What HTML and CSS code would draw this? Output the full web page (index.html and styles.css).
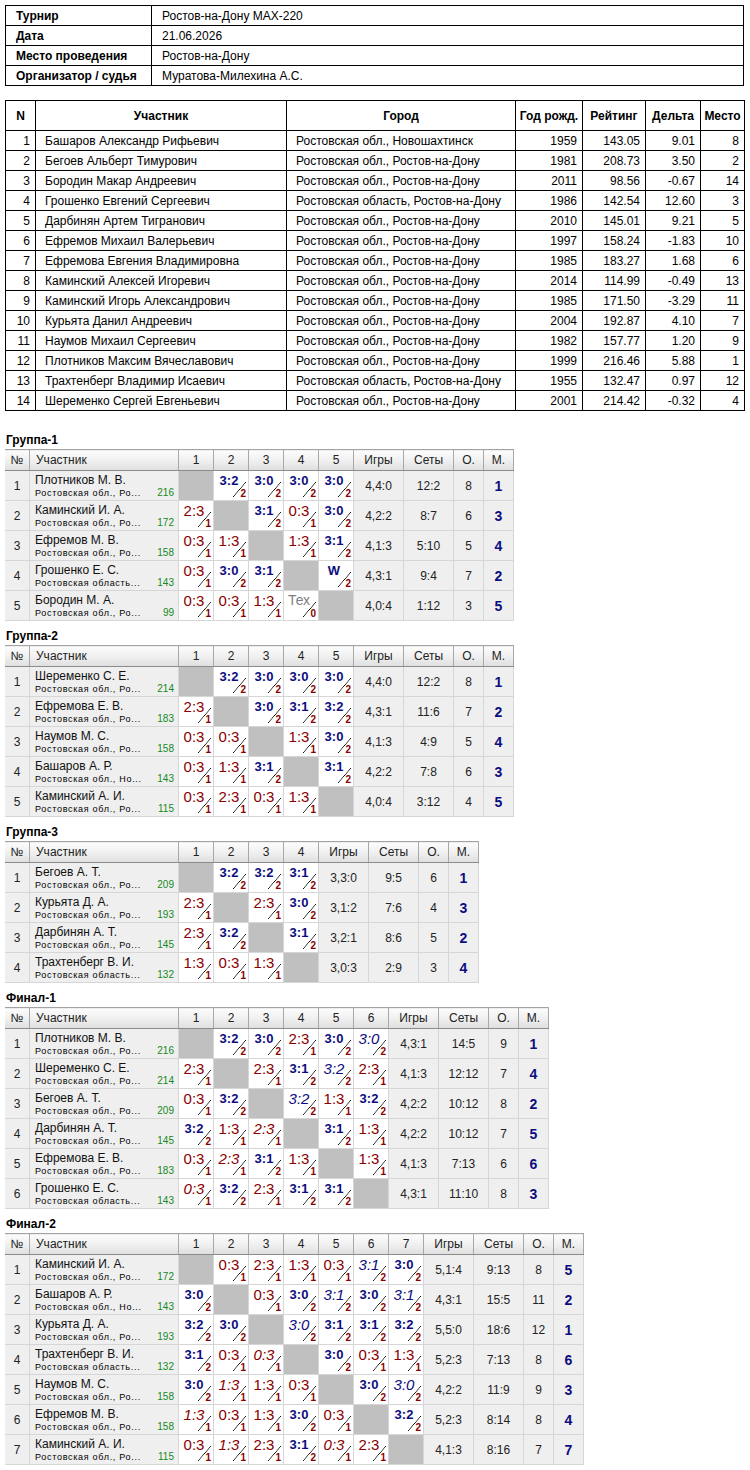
FILE: index.html
```html
<!DOCTYPE html>
<html lang="ru">
<head>
<meta charset="utf-8">
<title>Ростов-на-Дону MAX-220</title>
<link rel="stylesheet" href="styles.css">
</head>
<body>
<table class="info">
<tr><th>Турнир</th><td>Ростов-на-Дону MAX-220</td></tr>
<tr><th>Дата</th><td>21.06.2026</td></tr>
<tr><th>Место проведения</th><td>Ростов-на-Дону</td></tr>
<tr><th>Организатор / судья</th><td>Муратова-Милехина А.С.</td></tr>
</table>

<table class="plist">
<colgroup><col class="c1"><col class="c2"><col class="c3"><col class="c4"><col class="c5"><col class="c6"><col class="c7"></colgroup>
<tr class="hd"><th>N</th><th>Участник</th><th>Город</th><th>Год рожд.</th><th>Рейтинг</th><th>Дельта</th><th>Место</th></tr>
<tr><td class="n">1</td><td>Башаров Александр Рифьевич</td><td>Ростовская обл., Новошахтинск</td><td class="n">1959</td><td class="n">143.05</td><td class="n">9.01</td><td class="n">8</td></tr>
<tr><td class="n">2</td><td>Бегоев Альберт Тимурович</td><td>Ростовская обл., Ростов-на-Дону</td><td class="n">1981</td><td class="n">208.73</td><td class="n">3.50</td><td class="n">2</td></tr>
<tr><td class="n">3</td><td>Бородин Макар Андреевич</td><td>Ростовская обл., Ростов-на-Дону</td><td class="n">2011</td><td class="n">98.56</td><td class="n">-0.67</td><td class="n">14</td></tr>
<tr><td class="n">4</td><td>Грошенко Евгений Сергеевич</td><td>Ростовская область, Ростов-на-Дону</td><td class="n">1986</td><td class="n">142.54</td><td class="n">12.60</td><td class="n">3</td></tr>
<tr><td class="n">5</td><td>Дарбинян Артем Тигранович</td><td>Ростовская обл., Ростов-на-Дону</td><td class="n">2010</td><td class="n">145.01</td><td class="n">9.21</td><td class="n">5</td></tr>
<tr><td class="n">6</td><td>Ефремов Михаил Валерьевич</td><td>Ростовская обл., Ростов-на-Дону</td><td class="n">1997</td><td class="n">158.24</td><td class="n">-1.83</td><td class="n">10</td></tr>
<tr><td class="n">7</td><td>Ефремова Евгения Владимировна</td><td>Ростовская обл., Ростов-на-Дону</td><td class="n">1985</td><td class="n">183.27</td><td class="n">1.68</td><td class="n">6</td></tr>
<tr><td class="n">8</td><td>Каминский Алексей Игоревич</td><td>Ростовская обл., Ростов-на-Дону</td><td class="n">2014</td><td class="n">114.99</td><td class="n">-0.49</td><td class="n">13</td></tr>
<tr><td class="n">9</td><td>Каминский Игорь Александрович</td><td>Ростовская обл., Ростов-на-Дону</td><td class="n">1985</td><td class="n">171.50</td><td class="n">-3.29</td><td class="n">11</td></tr>
<tr><td class="n">10</td><td>Курьята Данил Андреевич</td><td>Ростовская обл., Ростов-на-Дону</td><td class="n">2004</td><td class="n">192.87</td><td class="n">4.10</td><td class="n">7</td></tr>
<tr><td class="n">11</td><td>Наумов Михаил Сергеевич</td><td>Ростовская обл., Ростов-на-Дону</td><td class="n">1982</td><td class="n">157.77</td><td class="n">1.20</td><td class="n">9</td></tr>
<tr><td class="n">12</td><td>Плотников Максим Вячеславович</td><td>Ростовская обл., Ростов-на-Дону</td><td class="n">1999</td><td class="n">216.46</td><td class="n">5.88</td><td class="n">1</td></tr>
<tr><td class="n">13</td><td>Трахтенберг Владимир Исаевич</td><td>Ростовская область, Ростов-на-Дону</td><td class="n">1955</td><td class="n">132.47</td><td class="n">0.97</td><td class="n">12</td></tr>
<tr><td class="n">14</td><td>Шеременко Сергей Евгеньевич</td><td>Ростовская обл., Ростов-на-Дону</td><td class="n">2001</td><td class="n">214.42</td><td class="n">-0.32</td><td class="n">4</td></tr>
</table>

<div class="ttl">Группа-1</div>
<table class="g g5">
<colgroup><col class="cn"><col class="cp"><col class="cs"><col class="cs"><col class="cs"><col class="cs"><col class="cs"><col class="cg"><col class="cg"><col class="co"><col class="co"></colgroup>
<tr><th>№</th><th class="th-l">Участник</th><th>1</th><th>2</th><th>3</th><th>4</th><th>5</th><th>Игры</th><th>Сеты</th><th>О.</th><th>М.</th></tr>
<tr><td class="no">1</td><td class="nm"><div class="n1">Плотников М. В.</div><div class="n2"><span>Ростовская обл., Ро...</span><span class="r">216</span></div></td><td class="x"></td><td class="s w">3:2<i>2</i></td><td class="s w">3:0<i>2</i></td><td class="s w">3:0<i>2</i></td><td class="s w">3:0<i>2</i></td><td class="rs">4,4:0</td><td class="rs">12:2</td><td class="rs">8</td><td class="pl">1</td></tr>
<tr><td class="no">2</td><td class="nm"><div class="n1">Каминский И. А.</div><div class="n2"><span>Ростовская обл., Ро...</span><span class="r">172</span></div></td><td class="s">2:3<i>1</i></td><td class="x"></td><td class="s w">3:1<i>2</i></td><td class="s">0:3<i>1</i></td><td class="s w">3:0<i>2</i></td><td class="rs">4,2:2</td><td class="rs">8:7</td><td class="rs">6</td><td class="pl">3</td></tr>
<tr><td class="no">3</td><td class="nm"><div class="n1">Ефремов М. В.</div><div class="n2"><span>Ростовская обл., Ро...</span><span class="r">158</span></div></td><td class="s">0:3<i>1</i></td><td class="s">1:3<i>1</i></td><td class="x"></td><td class="s">1:3<i>1</i></td><td class="s w">3:1<i>2</i></td><td class="rs">4,1:3</td><td class="rs">5:10</td><td class="rs">5</td><td class="pl">4</td></tr>
<tr><td class="no">4</td><td class="nm"><div class="n1">Грошенко Е. С.</div><div class="n2"><span>Ростовская область...</span><span class="r">143</span></div></td><td class="s">0:3<i>1</i></td><td class="s w">3:0<i>2</i></td><td class="s w">3:1<i>2</i></td><td class="x"></td><td class="s w">W<i>2</i></td><td class="rs">4,3:1</td><td class="rs">9:4</td><td class="rs">7</td><td class="pl">2</td></tr>
<tr><td class="no">5</td><td class="nm"><div class="n1">Бородин М. А.</div><div class="n2"><span>Ростовская обл., Ро...</span><span class="r">99</span></div></td><td class="s">0:3<i>1</i></td><td class="s">0:3<i>1</i></td><td class="s">1:3<i>1</i></td><td class="s t">Тех<i>0</i></td><td class="x"></td><td class="rs">4,0:4</td><td class="rs">1:12</td><td class="rs">3</td><td class="pl">5</td></tr>
</table>

<div class="ttl">Группа-2</div>
<table class="g g5">
<colgroup><col class="cn"><col class="cp"><col class="cs"><col class="cs"><col class="cs"><col class="cs"><col class="cs"><col class="cg"><col class="cg"><col class="co"><col class="co"></colgroup>
<tr><th>№</th><th class="th-l">Участник</th><th>1</th><th>2</th><th>3</th><th>4</th><th>5</th><th>Игры</th><th>Сеты</th><th>О.</th><th>М.</th></tr>
<tr><td class="no">1</td><td class="nm"><div class="n1">Шеременко С. Е.</div><div class="n2"><span>Ростовская обл., Ро...</span><span class="r">214</span></div></td><td class="x"></td><td class="s w">3:2<i>2</i></td><td class="s w">3:0<i>2</i></td><td class="s w">3:0<i>2</i></td><td class="s w">3:0<i>2</i></td><td class="rs">4,4:0</td><td class="rs">12:2</td><td class="rs">8</td><td class="pl">1</td></tr>
<tr><td class="no">2</td><td class="nm"><div class="n1">Ефремова Е. В.</div><div class="n2"><span>Ростовская обл., Ро...</span><span class="r">183</span></div></td><td class="s">2:3<i>1</i></td><td class="x"></td><td class="s w">3:0<i>2</i></td><td class="s w">3:1<i>2</i></td><td class="s w">3:2<i>2</i></td><td class="rs">4,3:1</td><td class="rs">11:6</td><td class="rs">7</td><td class="pl">2</td></tr>
<tr><td class="no">3</td><td class="nm"><div class="n1">Наумов М. С.</div><div class="n2"><span>Ростовская обл., Ро...</span><span class="r">158</span></div></td><td class="s">0:3<i>1</i></td><td class="s">0:3<i>1</i></td><td class="x"></td><td class="s">1:3<i>1</i></td><td class="s w">3:0<i>2</i></td><td class="rs">4,1:3</td><td class="rs">4:9</td><td class="rs">5</td><td class="pl">4</td></tr>
<tr><td class="no">4</td><td class="nm"><div class="n1">Башаров А. Р.</div><div class="n2"><span>Ростовская обл., Но...</span><span class="r">143</span></div></td><td class="s">0:3<i>1</i></td><td class="s">1:3<i>1</i></td><td class="s w">3:1<i>2</i></td><td class="x"></td><td class="s w">3:1<i>2</i></td><td class="rs">4,2:2</td><td class="rs">7:8</td><td class="rs">6</td><td class="pl">3</td></tr>
<tr><td class="no">5</td><td class="nm"><div class="n1">Каминский А. И.</div><div class="n2"><span>Ростовская обл., Ро...</span><span class="r">115</span></div></td><td class="s">0:3<i>1</i></td><td class="s">2:3<i>1</i></td><td class="s">0:3<i>1</i></td><td class="s">1:3<i>1</i></td><td class="x"></td><td class="rs">4,0:4</td><td class="rs">3:12</td><td class="rs">4</td><td class="pl">5</td></tr>
</table>

<div class="ttl">Группа-3</div>
<table class="g g4">
<colgroup><col class="cn"><col class="cp"><col class="cs"><col class="cs"><col class="cs"><col class="cs"><col class="cg"><col class="cg"><col class="co"><col class="co"></colgroup>
<tr><th>№</th><th class="th-l">Участник</th><th>1</th><th>2</th><th>3</th><th>4</th><th>Игры</th><th>Сеты</th><th>О.</th><th>М.</th></tr>
<tr><td class="no">1</td><td class="nm"><div class="n1">Бегоев А. Т.</div><div class="n2"><span>Ростовская обл., Ро...</span><span class="r">209</span></div></td><td class="x"></td><td class="s w">3:2<i>2</i></td><td class="s w">3:2<i>2</i></td><td class="s w">3:1<i>2</i></td><td class="rs">3,3:0</td><td class="rs">9:5</td><td class="rs">6</td><td class="pl">1</td></tr>
<tr><td class="no">2</td><td class="nm"><div class="n1">Курьята Д. А.</div><div class="n2"><span>Ростовская обл., Ро...</span><span class="r">193</span></div></td><td class="s">2:3<i>1</i></td><td class="x"></td><td class="s">2:3<i>1</i></td><td class="s w">3:0<i>2</i></td><td class="rs">3,1:2</td><td class="rs">7:6</td><td class="rs">4</td><td class="pl">3</td></tr>
<tr><td class="no">3</td><td class="nm"><div class="n1">Дарбинян А. Т.</div><div class="n2"><span>Ростовская обл., Ро...</span><span class="r">145</span></div></td><td class="s">2:3<i>1</i></td><td class="s w">3:2<i>2</i></td><td class="x"></td><td class="s w">3:1<i>2</i></td><td class="rs">3,2:1</td><td class="rs">8:6</td><td class="rs">5</td><td class="pl">2</td></tr>
<tr><td class="no">4</td><td class="nm"><div class="n1">Трахтенберг В. И.</div><div class="n2"><span>Ростовская область...</span><span class="r">132</span></div></td><td class="s">1:3<i>1</i></td><td class="s">0:3<i>1</i></td><td class="s">1:3<i>1</i></td><td class="x"></td><td class="rs">3,0:3</td><td class="rs">2:9</td><td class="rs">3</td><td class="pl">4</td></tr>
</table>

<div class="ttl">Финал-1</div>
<table class="g g6">
<colgroup><col class="cn"><col class="cp"><col class="cs"><col class="cs"><col class="cs"><col class="cs"><col class="cs"><col class="cs"><col class="cg"><col class="cg"><col class="co"><col class="co"></colgroup>
<tr><th>№</th><th class="th-l">Участник</th><th>1</th><th>2</th><th>3</th><th>4</th><th>5</th><th>6</th><th>Игры</th><th>Сеты</th><th>О.</th><th>М.</th></tr>
<tr><td class="no">1</td><td class="nm"><div class="n1">Плотников М. В.</div><div class="n2"><span>Ростовская обл., Ро...</span><span class="r">216</span></div></td><td class="x"></td><td class="s w">3:2<i>2</i></td><td class="s w">3:0<i>2</i></td><td class="s">2:3<i>1</i></td><td class="s w">3:0<i>2</i></td><td class="s wi">3:0<i>2</i></td><td class="rs">4,3:1</td><td class="rs">14:5</td><td class="rs">9</td><td class="pl">1</td></tr>
<tr><td class="no">2</td><td class="nm"><div class="n1">Шеременко С. Е.</div><div class="n2"><span>Ростовская обл., Ро...</span><span class="r">214</span></div></td><td class="s">2:3<i>1</i></td><td class="x"></td><td class="s">2:3<i>1</i></td><td class="s w">3:1<i>2</i></td><td class="s wi">3:2<i>2</i></td><td class="s">2:3<i>1</i></td><td class="rs">4,1:3</td><td class="rs">12:12</td><td class="rs">7</td><td class="pl">4</td></tr>
<tr><td class="no">3</td><td class="nm"><div class="n1">Бегоев А. Т.</div><div class="n2"><span>Ростовская обл., Ро...</span><span class="r">209</span></div></td><td class="s">0:3<i>1</i></td><td class="s w">3:2<i>2</i></td><td class="x"></td><td class="s wi">3:2<i>2</i></td><td class="s">1:3<i>1</i></td><td class="s w">3:2<i>2</i></td><td class="rs">4,2:2</td><td class="rs">10:12</td><td class="rs">8</td><td class="pl">2</td></tr>
<tr><td class="no">4</td><td class="nm"><div class="n1">Дарбинян А. Т.</div><div class="n2"><span>Ростовская обл., Ро...</span><span class="r">145</span></div></td><td class="s w">3:2<i>2</i></td><td class="s">1:3<i>1</i></td><td class="s li">2:3<i>1</i></td><td class="x"></td><td class="s w">3:1<i>2</i></td><td class="s">1:3<i>1</i></td><td class="rs">4,2:2</td><td class="rs">10:12</td><td class="rs">7</td><td class="pl">5</td></tr>
<tr><td class="no">5</td><td class="nm"><div class="n1">Ефремова Е. В.</div><div class="n2"><span>Ростовская обл., Ро...</span><span class="r">183</span></div></td><td class="s">0:3<i>1</i></td><td class="s li">2:3<i>1</i></td><td class="s w">3:1<i>2</i></td><td class="s">1:3<i>1</i></td><td class="x"></td><td class="s">1:3<i>1</i></td><td class="rs">4,1:3</td><td class="rs">7:13</td><td class="rs">6</td><td class="pl">6</td></tr>
<tr><td class="no">6</td><td class="nm"><div class="n1">Грошенко Е. С.</div><div class="n2"><span>Ростовская область...</span><span class="r">143</span></div></td><td class="s li">0:3<i>1</i></td><td class="s w">3:2<i>2</i></td><td class="s">2:3<i>1</i></td><td class="s w">3:1<i>2</i></td><td class="s w">3:1<i>2</i></td><td class="x"></td><td class="rs">4,3:1</td><td class="rs">11:10</td><td class="rs">8</td><td class="pl">3</td></tr>
</table>

<div class="ttl">Финал-2</div>
<table class="g g7">
<colgroup><col class="cn"><col class="cp"><col class="cs"><col class="cs"><col class="cs"><col class="cs"><col class="cs"><col class="cs"><col class="cs"><col class="cg"><col class="cg"><col class="co"><col class="co"></colgroup>
<tr><th>№</th><th class="th-l">Участник</th><th>1</th><th>2</th><th>3</th><th>4</th><th>5</th><th>6</th><th>7</th><th>Игры</th><th>Сеты</th><th>О.</th><th>М.</th></tr>
<tr><td class="no">1</td><td class="nm"><div class="n1">Каминский И. А.</div><div class="n2"><span>Ростовская обл., Ро...</span><span class="r">172</span></div></td><td class="x"></td><td class="s">0:3<i>1</i></td><td class="s">2:3<i>1</i></td><td class="s">1:3<i>1</i></td><td class="s">0:3<i>1</i></td><td class="s wi">3:1<i>2</i></td><td class="s w">3:0<i>2</i></td><td class="rs">5,1:4</td><td class="rs">9:13</td><td class="rs">8</td><td class="pl">5</td></tr>
<tr><td class="no">2</td><td class="nm"><div class="n1">Башаров А. Р.</div><div class="n2"><span>Ростовская обл., Но...</span><span class="r">143</span></div></td><td class="s w">3:0<i>2</i></td><td class="x"></td><td class="s">0:3<i>1</i></td><td class="s w">3:0<i>2</i></td><td class="s wi">3:1<i>2</i></td><td class="s w">3:0<i>2</i></td><td class="s wi">3:1<i>2</i></td><td class="rs">4,3:1</td><td class="rs">15:5</td><td class="rs">11</td><td class="pl">2</td></tr>
<tr><td class="no">3</td><td class="nm"><div class="n1">Курьята Д. А.</div><div class="n2"><span>Ростовская обл., Ро...</span><span class="r">193</span></div></td><td class="s w">3:2<i>2</i></td><td class="s w">3:0<i>2</i></td><td class="x"></td><td class="s wi">3:0<i>2</i></td><td class="s w">3:1<i>2</i></td><td class="s w">3:1<i>2</i></td><td class="s w">3:2<i>2</i></td><td class="rs">5,5:0</td><td class="rs">18:6</td><td class="rs">12</td><td class="pl">1</td></tr>
<tr><td class="no">4</td><td class="nm"><div class="n1">Трахтенберг В. И.</div><div class="n2"><span>Ростовская область...</span><span class="r">132</span></div></td><td class="s w">3:1<i>2</i></td><td class="s">0:3<i>1</i></td><td class="s li">0:3<i>1</i></td><td class="x"></td><td class="s w">3:0<i>2</i></td><td class="s">0:3<i>1</i></td><td class="s">1:3<i>1</i></td><td class="rs">5,2:3</td><td class="rs">7:13</td><td class="rs">8</td><td class="pl">6</td></tr>
<tr><td class="no">5</td><td class="nm"><div class="n1">Наумов М. С.</div><div class="n2"><span>Ростовская обл., Ро...</span><span class="r">158</span></div></td><td class="s w">3:0<i>2</i></td><td class="s li">1:3<i>1</i></td><td class="s">1:3<i>1</i></td><td class="s">0:3<i>1</i></td><td class="x"></td><td class="s w">3:0<i>2</i></td><td class="s wi">3:0<i>2</i></td><td class="rs">4,2:2</td><td class="rs">11:9</td><td class="rs">9</td><td class="pl">3</td></tr>
<tr><td class="no">6</td><td class="nm"><div class="n1">Ефремов М. В.</div><div class="n2"><span>Ростовская обл., Ро...</span><span class="r">158</span></div></td><td class="s li">1:3<i>1</i></td><td class="s">0:3<i>1</i></td><td class="s">1:3<i>1</i></td><td class="s w">3:0<i>2</i></td><td class="s">0:3<i>1</i></td><td class="x"></td><td class="s w">3:2<i>2</i></td><td class="rs">5,2:3</td><td class="rs">8:14</td><td class="rs">8</td><td class="pl">4</td></tr>
<tr><td class="no">7</td><td class="nm"><div class="n1">Каминский А. И.</div><div class="n2"><span>Ростовская обл., Ро...</span><span class="r">115</span></div></td><td class="s">0:3<i>1</i></td><td class="s li">1:3<i>1</i></td><td class="s">2:3<i>1</i></td><td class="s w">3:1<i>2</i></td><td class="s li">0:3<i>1</i></td><td class="s">2:3<i>1</i></td><td class="x"></td><td class="rs">4,1:3</td><td class="rs">8:16</td><td class="rs">7</td><td class="pl">7</td></tr>
</table>
</body>
</html>
```

FILE: styles.css
```css
html, body {
  background: #fff;
}
body {
  margin: 5px;
  font-family: "Liberation Sans", Arial, sans-serif;
  font-size: 12px;
  color: #000;
}

/* info table */
.info {
  border-collapse: collapse;
  width: 739px;
}
.info th, .info td {
  border: 1px solid #000;
  height: 19px;
  padding: 0 10px;
  text-align: left;
  font-size: 12px;
  line-height: 14px;
}
.info th {
  width: 125px;
  font-weight: bold;
}

/* participant list */
.plist {
  border-collapse: collapse;
  width: 739px;
  margin-top: 14px;
  margin-bottom: 14px;
  table-layout: fixed;
}
.plist .c1 { width: 30px; }
.plist .c2 { width: 251px; }
.plist .c3 { width: 229px; }
.plist .c4 { width: 67px; }
.plist .c5 { width: 63px; }
.plist .c6 { width: 55px; }
.plist .c7 { width: 44px; }
.plist th, .plist td {
  border: 1px solid #000;
  height: 19px;
  padding: 0 5px 0 9px;
  font-size: 12px;
  line-height: 14px;
  white-space: nowrap;
  overflow: hidden;
  text-align: left;
}
.plist tr.hd th {
  height: 29px;
  font-weight: bold;
  text-align: center;
  padding: 0 2px;
}
.plist td.n {
  text-align: right;
  padding: 0 5px 0 2px;
}

/* section titles */
.ttl {
  font-weight: bold;
  font-size: 12px;
  line-height: 14px;
  padding: 8px 0 2px 1px;
}

/* group tables */
.g {
  border-collapse: collapse;
  table-layout: fixed;
  margin-left: -1px;
  border: 1px solid #a3a3a3;
  color: #222;
}
.g4 { width: 474px; }
.g5 { width: 509px; }
.g6 { width: 544px; }
.g7 { width: 579px; }
.g .cn { width: 25px; }
.g .cp { width: 149px; }
.g .cs { width: 35px; }
.g .cg { width: 50px; }
.g .co { width: 30px; }

.g th {
  height: 20px;
  padding: 0;
  font-weight: normal;
  font-size: 12px;
  line-height: 14px;
  color: #222;
  text-align: center;
  background: linear-gradient(#fcfcfc, #f0f0f0 50%, #dedede);
  border-right: 1px solid #a8a8a8;
  border-bottom: 1px solid #8c8c8c;
}
.g th.th-l {
  text-align: left;
  padding-left: 6px;
}

.g td {
  height: 29px;
  padding: 0;
  border: 1px solid #d6d6d6;
  background: #efefef;
  font-size: 12px;
  line-height: 14px;
  text-align: center;
  vertical-align: middle;
  white-space: nowrap;
}
.g td.no {
  color: #222;
}
.g td.nm {
  height: 27px;
  text-align: left;
  vertical-align: top;
  padding: 2px 4px 0 5px;
}
.n1 {
  font-size: 12px;
  line-height: 14px;
  color: #111;
}
.n2 {
  display: flex;
  justify-content: space-between;
  align-items: baseline;
  font-size: 9px;
  line-height: 11px;
  letter-spacing: 0.7px;
  color: #000;
}
.n2 .r {
  font-size: 10px;
  letter-spacing: 0;
  color: #16891a;
}
.g td.rs {
  color: #222;
}
.g td.pl {
  font-weight: bold;
  font-size: 14px;
  color: #0d0d80;
}
.g td.x {
  background: #c0c0c0;
}

/* score cells */
.g td.s {
  position: relative;
  height: 28px;
  background: #fff;
  vertical-align: top;
  padding: 1px 4px 0 0;
  font-size: 15px;
  line-height: 17px;
  color: #8a0000;
}
.g td.s.w {
  font-weight: bold;
  font-size: 13px;
  color: #0d0d80;
}
.g td.s.wi {
  font-style: italic;
  color: #0d0d80;
}
.g td.s.li {
  font-style: italic;
}
.g td.s.t {
  color: #808080;
  font-size: 14px;
}
.g td.s::before {
  content: "";
  position: absolute;
  right: 2px;
  bottom: 3px;
  width: 13px;
  height: 15px;
  background: linear-gradient(to bottom right, transparent calc(50% - 0.6px), #000 50%, transparent calc(50% + 0.6px));
}
.g td.s i {
  position: absolute;
  right: 2px;
  bottom: 1px;
  font-style: normal;
  font-weight: bold;
  font-size: 10px;
  line-height: 10px;
  color: #8a0000;
}
```
